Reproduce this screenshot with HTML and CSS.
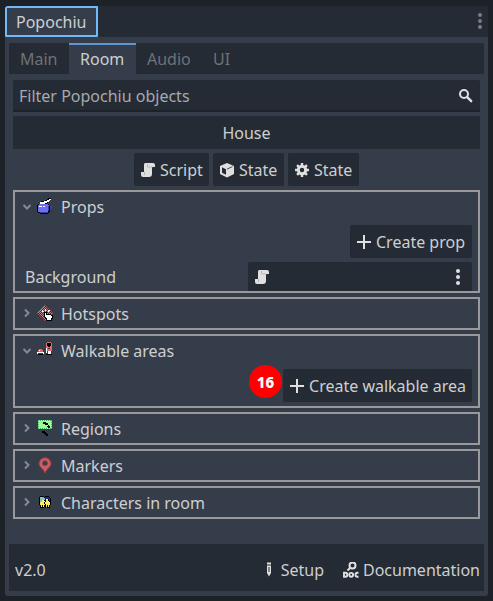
FILE: index.html
```html
<!DOCTYPE html>
<html lang="en">
<head>
<meta charset="utf-8">
<title>Popochiu</title>
<link rel="stylesheet" href="styles.css">
</head>
<body>
<svg class="defs" aria-hidden="true">
  <symbol id="script" viewBox="0 0 16 16"><path fill="#e0e0e0" d="M5 1h8a2 2 0 0 1 2 2v2h-3v7a3 3 0 0 1-3 3H3a2 2 0 0 1-2-2v-3h3V3a2 2 0 0 1 1-2z"/><path fill="none" stroke="#b4b8bb" d="M7.500 2v3h5M4.500 10v3"/></symbol>
  <symbol id="plus" viewBox="0 0 16 16"><path fill="#e0e0e0" d="M7 1h2v6h6v2H9v6H7V9H1V7h6z"/></symbol>
  <symbol id="dots" viewBox="0 0 4 16"><circle cx="2" cy="2" r="2"/><circle cx="2" cy="8" r="2"/><circle cx="2" cy="14" r="2"/></symbol>
  <symbol id="chevron" viewBox="0 0 10 10"><path fill="none" stroke="#858a93" stroke-width="2" d="M1.500 3 5 6.500 8.500 3"/></symbol>
</svg>
<main class="dock">
  <header class="dock-tabs">
    <div class="dock-tab">Popochiu</div>
    <svg class="dock-menu"><use href="#dots"/></svg>
  </header>
  <div class="content">
    <nav class="tabs">
      <div class="tab">Main</div><div class="tab active">Room</div><div class="tab">Audio</div><div class="tab">UI</div>
    </nav>
    <div class="body">
      <div class="filter"><span>Filter Popochiu objects</span>
        <svg class="icon" viewBox="0 0 16 16"><g fill="none" stroke="#e0e0e0" stroke-width="2"><circle cx="6" cy="6" r="4"/><path d="m9.200 9.200 4 4" stroke-width="2.400" stroke-linecap="round"/></g></svg>
      </div>
      <div class="room-name">House</div>
      <div class="actions">
        <div class="button script-button"><svg class="icon"><use href="#script"/></svg>Script</div>
        <div class="button state-button"><svg class="icon" viewBox="0 0 16 16"><path fill="#e0e0e0" d="m8 1 7 3v8l-7 3.500L1 12V4z"/><path fill="#252b34" d="m3 5.300 4 2v5.500l-4-2z"/><path fill="none" stroke="#252b34" stroke-width=".8" d="m8 7.200 5.500-2.700"/></svg>State</div>
        <div class="button state-button"><svg class="icon" viewBox="0 0 16 16"><circle cx="8" cy="8" r="3.700" fill="none" stroke="#e0e0e0" stroke-width="3"/><path stroke="#e0e0e0" stroke-width="2.400" d="M8 1v2.500M8 12.500V15M1 8h2.500M12.500 8H15M3.050 3.050l2 2M10.950 10.950l2 2M12.950 3.050l-2 2M5.050 10.950l-2 2"/></svg>State</div>
      </div>
      <section class="group props">
        <div class="title"><svg class="arrow"><use href="#chevron"/></svg>
          <svg class="art" viewBox="0 0 16 17">
            <path fill="#000" d="M11 0h3v2h-1v1h-1v1h-1v1h-1v1H3V4h1V3h4V2h2V1h1zM1 6h11v2h3v2h-1v2h-1v2h-1v1h-1v1H3v-1H1v-1H0V7h1z"/>
            <path fill="#fff" d="M12 1h2v1h-1v1h-1v1h-2v1H8v1H3V4h4V3h3V2h2z"/>
            <path fill="#6c70ee" d="M2 6h9v1h1v6h-1v2H3v-1H1V7h1z"/>
            <path fill="#3a3fac" d="M2 14h9v1H3v-1zM11 8h1v5h-1zM13 8h2v2h-1v2h-1z"/><path fill="#fff" d="M2 8h3v1H2zM6 8h2v1H6z"/>
          </svg><span>Props</span></div>
        <div class="create-line"><div class="button wide"><svg class="icon"><use href="#plus"/></svg>Create prop</div></div>
        <div class="object"><span>Background</span><div class="object-tools"><svg class="icon"><use href="#script"/></svg><svg class="menu"><use href="#dots"/></svg></div></div>
      </section>
      <section class="group">
        <div class="title"><svg class="arrow closed"><use href="#chevron"/></svg>
          <svg class="art" viewBox="0 0 16 17">
            <defs><pattern id="weave" width="2" height="2" patternUnits="userSpaceOnUse"><path fill="#303039" d="M0 0h2v2H0z"/><path fill="#a99095" d="M0 0h1v1H0zM1 1h1v1H1z"/></pattern></defs>
            <path fill="#964049" d="M7 0h2v1h1v1h1v1h1v1h1v1h1v1h1v1h1v2h-1v1h-1v1h-1v1h-1v1h-1v1h-1v1H9v1H7v-1H6v-1H5v-1H4v-1H3v-1H2v-1H1v-1H0V7h1V6h1V5h1V4h1V3h1V2h1V1h1z"/>
            <path fill="url(#weave)" d="M7 1h2v1h1v1h1v1h1v1h1v1h1v1h1v2h-1v1h-1v1h-1v1h-1v1h-1v1H9v1H7v-1H6v-1H5v-1H4v-1H3v-1H2v-1H1V7h1V6h1V5h1V4h1V3h1V2h1z"/>
            <path fill="#000" d="M7 7h3v2h4v1h2v4h-1v2H9v-2H8v-2H7z"/>
            <path fill="#fff" d="M8 8h1v2h5v1h1v2h-1v2h-4v-2H9v-1H8zM8 4h1v2H8zM5 5h1v1h1v1H5zM11 5h2v1h-1v1h-1z"/>
          </svg><span>Hotspots</span></div>
      </section>
      <section class="group walkable">
        <div class="title"><svg class="arrow"><use href="#chevron"/></svg>
          <svg class="art" viewBox="0 0 16 17">
            <path fill="#e0696c" d="M9 1h1V0h4v1h1v8H9zM2 7h3v1h1v3H1V8h1z"/>
            <path fill="#000" d="M10 1h4v3h-1v1h-2V4h-1zM1 12h5v1H1zM9 12h6v1H9z"/>
            <path fill="#fff" d="M9 6h1v5H9zM11 9h3v3h-3zM0 10h7v2H6v-1H1v1H0zM2 8h1v1H2z"/>
            <path fill="#542e39" d="M11 6h2v1h-2zM1 11h5v1H1zM14 9h1v3h-1zM9 11h2v1H9z"/>
          </svg><span>Walkable areas</span></div>
        <div class="create-line"><div class="button"><svg class="icon"><use href="#plus"/></svg>Create walkable area<b class="badge">16</b></div></div>
      </section>
      <section class="group">
        <div class="title"><svg class="arrow closed"><use href="#chevron"/></svg>
          <svg class="art" viewBox="0 0 16 17">
            <path fill="#9dfd96" d="M1 0h14v9H1z"/><path fill="none" stroke="#48b35d" stroke-dasharray="1 1" d="M1 .500h14M1 8.500h14M1.500 0v9M14.500 0v9"/>
            <path fill="#000" d="M6 2h3v1h2v2h1v1h1v2h-2V7h-1V5H8V4H6zM5 11h3v1h1v1h1v1h1v2H9v-1H8v-1H7v-1H5z"/><path fill="#fff" d="M10 5h1v1h-1z"/>
          </svg><span>Regions</span></div>
      </section>
      <section class="group">
        <div class="title"><svg class="arrow closed"><use href="#chevron"/></svg>
          <svg class="art smooth" viewBox="0 0 16 17"><path fill="#c95f66" stroke="#a23942" d="M8 .700a6 6 0 0 0-6 6c0 3.200 4 4.500 6 9.300 2-4.800 6-6.100 6-9.300a6 6 0 0 0-6-6z"/><circle cx="8" cy="6.200" r="2.500" fill="#363d4a" stroke="#a23942"/></svg><span>Markers</span></div>
      </section>
      <section class="group">
        <div class="title"><svg class="arrow closed"><use href="#chevron"/></svg>
          <svg class="art" viewBox="0 0 16 17">
            <path fill="#000" d="M3 2h4v1h1V2h4v1h1v1h1v7h-1v3h-3v-1H9v1H8v-1H7v1H3v-3H2V3h1z"/>
            <path fill="#6cc9c7" d="M3 3h4v1h1v2H5v2H3z"/><path fill="#2525a4" d="M8 3h4v1h1v3h-1V5H8z"/>
            <path fill="#f9ed6a" d="M5 6h2v1h1v1H7v2h1v1H7v2H6v-2H5v2H4v-2H3V8h2zM9 5h2v2h1v1h1v3h-1v2h-1v-2h-1v2H9v-3H8V8h1z"/>
            <path fill="#fff" d="M6 6h1v1H6zM9 5h1v1H9z"/>
          </svg><span>Characters in room</span></div>
      </section>
    </div>
    <footer class="footer">
      <span class="version">v2.0</span>
      <div class="link setup"><svg class="icon" viewBox="0 0 16 16"><path fill="#e0e0e0" d="M6 .500h4v2H6zM6 3.500h4V11l-2 3.500L6 11z"/><path fill="#252b34" d="M7.500 5h1v5h-1z"/></svg>Setup</div>
      <div class="link"><svg class="icon" viewBox="0 0 16 16"><g fill="none" stroke="#e0e0e0" stroke-width="2"><circle cx="9.500" cy="3.500" r="3"/><path d="M7.300 5.700 4.500 8.500"/><path stroke-width="1.900" d="M1 10.800h1.500q1.800 0 1.800 2t-1.800 2H1zM15.500 10.800h-1q-2 0-2 2t2 2h1"/><circle cx="8.200" cy="12.800" r="1.900" stroke-width="1.900"/></g></svg>Documentation</div>
    </footer>
  </div>
</main>
</body>
</html>
```
FILE: styles.css
```css
* { box-sizing: border-box; }
body {
  margin: 0;
  height: 601px;
  padding: 6px 5px 5px;
  overflow: hidden;
  background: #1d2229;
  color: #cdcfd2;
  font: 16px "Noto Sans", sans-serif;
  white-space: nowrap;
}
svg { display: block; flex: none; }
.defs { position: absolute; width: 0; height: 0; }
.icon { width: 16px; height: 16px; }
.dock { height: 590px; width: 483px; display: flex; flex-direction: column; background: #363d4a; border-radius: 3px; overflow: hidden; }
.dock-tabs { height: 31px; display: flex; justify-content: space-between; align-items: center; padding-right: 6px; background: #252b34; }
.dock-tab { width: 93px; height: 31px; border: 2px solid #70bafa; background: #363d4a; line-height: 28px; padding-left: 9px; border-radius: 1px; }
.dock-menu { width: 4px; height: 16px; margin-top: -1px; fill: #7c7e84; }
.content { flex: 1; display: flex; flex-direction: column; padding: 6px 4px 5px; }
.tabs { height: 31px; display: flex; background: #252b34; border-radius: 2px 2px 0 0; line-height: 32px; color: #6e7278; }
.tab { width: 60px; padding-left: 11px; }
.tab.active { width: 67px; border-top: 2px solid #5f98d0; background: #363d4a; color: #cdcfd2; line-height: 28px; }
.tab:nth-child(3) { width: 66px; }
.body { padding: 6px 4px 0; display: flex; flex-direction: column; gap: 4px; }
.filter { height: 32px; display: flex; align-items: center; justify-content: space-between; padding: 2px 6px 0 6px; border-bottom: 2px solid #1d2229; border-radius: 2px 2px 0 0; background: #252b34; color: #a6a9ad; }
.room-name { height: 33px; line-height: 34px; text-align: center; background: #252b34; }
.actions { display: flex; gap: 4px; padding-left: 121px; }
.button { position: relative; height: 33px; display: flex; align-items: center; gap: 4px; padding: 0 6px; background: #252b34; border-radius: 2px; }
.button.wide { padding-right: 7px; }
.script-button { width: 75px; }
.state-button { width: 71px; }
.group { height: 33px; border: 2px solid #999; }
.props { height: 103px; }
.walkable { height: 74px; }
.title { height: 29px; display: flex; align-items: center; padding-left: 7px; }
.arrow { width: 10px; height: 10px; margin-right: 5px; }
.closed { transform: translateY(-1px) rotate(-90deg); }
.art { width: 16px; height: 17px; margin-right: 8px; shape-rendering: crispEdges; }
.art.smooth { shape-rendering: auto; }
.create-line { display: flex; justify-content: flex-end; padding: 4px 6px 0 0; }
.object { height: 29px; margin-top: 4px; padding: 0 6px 0 10px; display: flex; align-items: center; justify-content: space-between; }
.object-tools { width: 224px; height: 29px; padding: 0 12px 0 6px; display: flex; align-items: center; justify-content: space-between; background: #252b34; border-radius: 2px 2px 0 0; }
.menu { width: 4px; height: 16px; fill: #e0e0e0; }
.badge { position: absolute; left: -34px; top: -4px; width: 33px; height: 33px; border-radius: 50%; background: #f00; color: #fff; font: 800 15px/34px "Noto Sans", sans-serif; text-align: center; }
.footer { height: 47px; margin-top: auto; display: flex; align-items: center; padding: 5px 4px 0 6px; background: #252b34; }
.version { margin-right: auto; }
.link { display: flex; align-items: center; gap: 4px; }
.setup { margin-right: 19px; }
```
